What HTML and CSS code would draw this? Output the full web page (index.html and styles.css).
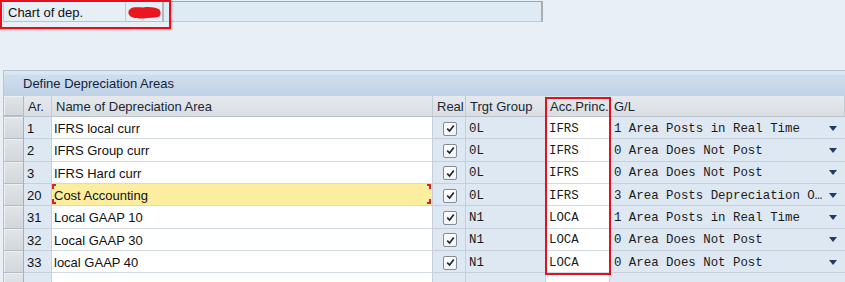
FILE: index.html
```html
<!DOCTYPE html>
<html>
<head>
<meta charset="utf-8">
<link rel="stylesheet" href="styles.css">
</head>
<body>
<div class="page">
  <div class="topbar">
    <div class="lbl">Chart of dep.</div>
    <div class="key">
      <svg class="redact" width="38" height="18" viewBox="0 0 38 18"><path d="M3 6 C6 3 12 4 18 4 C24 3 30 4 35 6 C37 8 37 12 35 14 C30 16 24 15 18 16 C12 16 6 16 3 13 C1 11 1 8 3 6 Z" fill="#ea1620"/></svg>
    </div>
    <div class="desc"></div>
    <div class="mark mark-top"></div>
  </div>

  <div class="table">
    <div class="title">Define Depreciation Areas</div>
    <div class="row head">
      <div class="c sel"></div>
      <div class="c">Ar.</div>
      <div class="c">Name of Depreciation Area</div>
      <div class="c">Real</div>
      <div class="c">Trgt Group</div>
      <div class="c">Acc.Princ.</div>
      <div class="c">G/L</div>
    </div>

    <div class="row">
      <div class="c sel"></div><div class="c ro ar">1</div><div class="c ed nm">IFRS local curr</div>
      <div class="c ro rl"><span class="cb"><svg width="9" height="9" viewBox="0 0 9 9"><path d="M1.2 4.6 L3.6 7 L7.8 1.6" fill="none" stroke="#1d2733" stroke-width="1.7"/></svg></span></div>
      <div class="c ro mono">0L</div><div class="c ed mono">IFRS</div>
      <div class="c ro mono gl"><span class="txt">1 Area Posts in Real Time</span><span class="dd"></span></div>
    </div>
    <div class="row">
      <div class="c sel"></div><div class="c ro ar">2</div><div class="c ed nm">IFRS Group curr</div>
      <div class="c ro rl"><span class="cb"><svg width="9" height="9" viewBox="0 0 9 9"><path d="M1.2 4.6 L3.6 7 L7.8 1.6" fill="none" stroke="#1d2733" stroke-width="1.7"/></svg></span></div>
      <div class="c ro mono">0L</div><div class="c ed mono">IFRS</div>
      <div class="c ro mono gl"><span class="txt">0 Area Does Not Post</span><span class="dd"></span></div>
    </div>
    <div class="row">
      <div class="c sel"></div><div class="c ro ar">3</div><div class="c ed nm">IFRS Hard curr</div>
      <div class="c ro rl"><span class="cb"><svg width="9" height="9" viewBox="0 0 9 9"><path d="M1.2 4.6 L3.6 7 L7.8 1.6" fill="none" stroke="#1d2733" stroke-width="1.7"/></svg></span></div>
      <div class="c ro mono">0L</div><div class="c ed mono">IFRS</div>
      <div class="c ro mono gl"><span class="txt">0 Area Does Not Post</span><span class="dd"></span></div>
    </div>
    <div class="row">
      <div class="c sel"></div><div class="c ro ar">20</div><div class="c ed nm focus">Cost Accounting</div>
      <div class="c ro rl"><span class="cb"><svg width="9" height="9" viewBox="0 0 9 9"><path d="M1.2 4.6 L3.6 7 L7.8 1.6" fill="none" stroke="#1d2733" stroke-width="1.7"/></svg></span></div>
      <div class="c ro mono">0L</div><div class="c ed mono">IFRS</div>
      <div class="c ro mono gl"><span class="txt">3 Area Posts Depreciation O…</span><span class="dd"></span></div>
    </div>
    <div class="row">
      <div class="c sel"></div><div class="c ro ar">31</div><div class="c ed nm">Local GAAP 10</div>
      <div class="c ro rl"><span class="cb"><svg width="9" height="9" viewBox="0 0 9 9"><path d="M1.2 4.6 L3.6 7 L7.8 1.6" fill="none" stroke="#1d2733" stroke-width="1.7"/></svg></span></div>
      <div class="c ro mono">N1</div><div class="c ed mono">LOCA</div>
      <div class="c ro mono gl"><span class="txt">1 Area Posts in Real Time</span><span class="dd"></span></div>
    </div>
    <div class="row">
      <div class="c sel"></div><div class="c ro ar">32</div><div class="c ed nm">Local GAAP 30</div>
      <div class="c ro rl"><span class="cb"><svg width="9" height="9" viewBox="0 0 9 9"><path d="M1.2 4.6 L3.6 7 L7.8 1.6" fill="none" stroke="#1d2733" stroke-width="1.7"/></svg></span></div>
      <div class="c ro mono">N1</div><div class="c ed mono">LOCA</div>
      <div class="c ro mono gl"><span class="txt">0 Area Does Not Post</span><span class="dd"></span></div>
    </div>
    <div class="row">
      <div class="c sel"></div><div class="c ro ar">33</div><div class="c ed nm">local GAAP 40</div>
      <div class="c ro rl"><span class="cb"><svg width="9" height="9" viewBox="0 0 9 9"><path d="M1.2 4.6 L3.6 7 L7.8 1.6" fill="none" stroke="#1d2733" stroke-width="1.7"/></svg></span></div>
      <div class="c ro mono">N1</div><div class="c ed mono">LOCA</div>
      <div class="c ro mono gl"><span class="txt">0 Area Does Not Post</span><span class="dd"></span></div>
    </div>
    <div class="row">
      <div class="c sel"></div><div class="c ro ar"></div><div class="c ed nm"></div>
      <div class="c ro rl"></div>
      <div class="c ro mono"></div><div class="c ed mono"></div>
      <div class="c ro mono gl"></div>
    </div>

    <div class="mark mark-acc"></div>
  </div>
</div>
</body>
</html>
```

FILE: styles.css
```css
html, body {
  margin: 0;
  padding: 0;
  background: #e9eff6;
  overflow: hidden;
}
.page {
  position: relative;
  width: 845px;
  height: 282px;
  font-family: "Liberation Sans", Arial, sans-serif;
  font-size: 13px;
  color: #111;
}
.topbar {
  display: flex;
  padding: 1px 0 0 3px;
  height: 22px;
  box-sizing: content-box;
}
.lbl {
  width: 122px;
  height: 20px;
  margin-top: 1px;
  box-sizing: border-box;
  border-left: 1px solid #c3ccd6;
  border-bottom: 1px solid #b9c3cd;
  background: #e6eef6;
  padding-left: 4px;
  padding-top: 1px;
  line-height: 19px;
}
.key {
  width: 38px;
  height: 20px;
  margin-top: 1px;
  box-sizing: border-box;
  border-left: 1px solid #c3ccd6;
  border-right: 1px solid #b0b8c2;
  border-bottom: 1px solid #b9c3cd;
  background: #e6eef6;
  display: flex;
  align-items: center;
}
.redact { display: block; margin-left: 1px; }
.desc {
  width: 380px;
  height: 21px;
  box-sizing: border-box;
  border: 1px solid #b4b8bd;
  border-top-color: #a3a7ac;
  border-right: 2px solid #a9adb2;
  border-bottom-color: #c4c9ce;
  background: #deeaf4;
}
.mark {
  position: absolute;
  border: 2px solid #e3101f;
  box-sizing: border-box;
  pointer-events: none;
}
.mark-top {
  left: 0;
  top: 0;
  width: 171px;
  height: 29px;
  box-shadow: 1px 1px 2px rgba(0,0,0,0.25);
}

.table {
  position: relative;
  margin: 47px 0 0 3px;
  border-top: 1px solid #b3c3d4;
}
.title {
  height: 25px;
  box-sizing: border-box;
  padding-left: 19px;
  padding-top: 1px;
  line-height: 24px;
  background: linear-gradient(#dbe7f3 0, #dbe7f3 3px, #cfdeee 4px, #bfd2e6 100%);
  color: #13243a;
  border-left: 1px solid #b6c6d6;
}
.row {
  display: grid;
  grid-template-columns: 21px 28px 381px 33px 80px 64px 1fr;
  height: 22.33px;
  box-sizing: border-box;
}
.row.head {
  height: 21px;
  background: linear-gradient(#e6e9ec, #d9dee3);
  border-bottom: 1px solid #b9c1ca;
}
.c {
  position: relative;
  box-sizing: border-box;
  border-right: 1px solid #c7d0da;
  border-bottom: 1px solid #c7d0da;
  display: flex;
  align-items: center;
  padding-left: 3px;
  padding-top: 2px;
  white-space: nowrap;
  overflow: hidden;
}
.head .c {
  border-bottom: none;
  border-right: 1px solid #c4ccd4;
  padding-left: 4px;
  padding-top: 1px;
  color: #1a2633;
}
.c.sel {
  padding: 0;
  background: linear-gradient(#e2e5e8, #d2d7dc);
  border-left: 1px solid #b8c0c9;
  border-right: 1px solid #a7b0ba;
  border-bottom: 1px solid #b3bbc4;
  box-shadow: inset 1px 1px 0 #eef0f2;
}
.head .c.sel {
  border-right: 1px solid #b3bcc5;
}
.ro { background: #dde8f3; }
.ed { background: #ffffff; border-bottom-color: #d3d9e0; }
.ar { padding-left: 3px; }
.nm { padding-left: 2px; }
.rl { justify-content: center; padding-left: 0; }
.mono {
  font-family: "Liberation Mono", "Courier New", monospace;
  font-size: 12.4px;
  color: #1b1b1b;
  padding-left: 3px;
}
.ed.mono { padding-left: 3px; }
.gl {
  justify-content: space-between;
  padding-left: 4px;
  padding-right: 7px;
  border-right: none;
}
.cb {
  width: 14px;
  height: 14px;
  box-sizing: border-box;
  border: 1px solid #838b95;
  border-radius: 2px;
  background: linear-gradient(#ffffff, #f1f3f5);
  display: flex;
  align-items: center;
  justify-content: center;
  margin-left: 2px;
}
.cb svg { display: block; }
.dd {
  width: 0;
  height: 0;
  border-left: 4px solid transparent;
  border-right: 4px solid transparent;
  border-top: 5px solid #1e3c66;
  margin-top: -1px;
  margin-right: 1px;
}
.focus {
  background: #fdee9f;
}
.focus::before {
  content: "";
  position: absolute;
  left: 0; top: 0; right: 1px; bottom: 1px;
  background:
    linear-gradient(#d8222d, #d8222d) left top / 2px 5px no-repeat,
    linear-gradient(#d8222d, #d8222d) left top / 4px 2px no-repeat,
    linear-gradient(#d8222d, #d8222d) left bottom / 2px 5px no-repeat,
    linear-gradient(#d8222d, #d8222d) left bottom / 4px 2px no-repeat,
    linear-gradient(#d8222d, #d8222d) right top / 2px 5px no-repeat,
    linear-gradient(#d8222d, #d8222d) right top / 4px 2px no-repeat,
    linear-gradient(#d8222d, #d8222d) right bottom / 2px 5px no-repeat,
    linear-gradient(#d8222d, #d8222d) right bottom / 4px 2px no-repeat;
}
.mark-acc {
  left: 542px;
  top: 26px;
  width: 66px;
  height: 178px;
}
```
